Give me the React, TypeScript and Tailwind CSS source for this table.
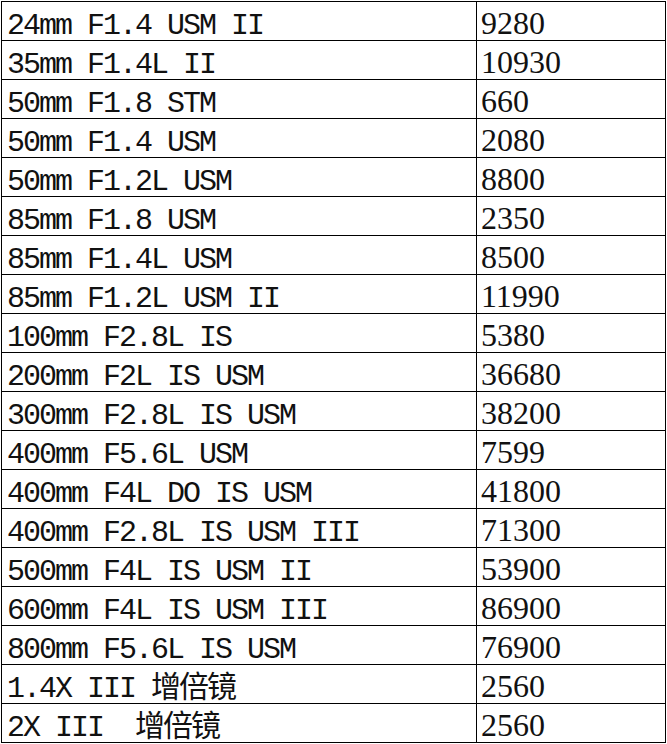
const lenses: [string, string][] = [
  ['24mm F1.4 USM II', '9280'],
  ['35mm F1.4L II', '10930'],
  ['50mm F1.8 STM', '660'],
  ['50mm F1.4 USM', '2080'],
  ['50mm F1.2L USM', '8800'],
  ['85mm F1.8 USM', '2350'],
  ['85mm F1.4L USM', '8500'],
  ['85mm F1.2L USM II', '11990'],
  ['100mm F2.8L IS', '5380'],
  ['200mm F2L IS USM', '36680'],
  ['300mm F2.8L IS USM', '38200'],
  ['400mm F5.6L USM', '7599'],
  ['400mm F4L DO IS USM', '41800'],
  ['400mm F2.8L IS USM III', '71300'],
  ['500mm F4L IS USM II', '53900'],
  ['600mm F4L IS USM III', '86900'],
  ['800mm F5.6L IS USM', '76900'],
  ['1.4X III 增倍镜', '2560'],
  ['2X III  增倍镜', '2560'],
]

export default function App() {
  return (
    <div className="min-h-screen bg-white pl-px pt-px">
      <div className="grid w-[665px] grid-cols-[475px_189px] border-l border-t border-black text-[#111]">
        {lenses.map(([name, price]) => (
          <div key={name} className="contents">
            <div className="flex h-[39px] items-end border-b border-r border-black pl-[5px]">
              <span className="-mb-px whitespace-pre font-['Liberation_Mono','Noto_Sans_CJK_SC',monospace] text-[30px] leading-[30px] tracking-[-2px]">
                {name}
              </span>
            </div>
            <div className="flex h-[39px] items-end border-b border-r border-black pb-px pl-[4px]">
              <span className="font-['Liberation_Serif','Noto_Serif_CJK_SC',serif] text-[32px] leading-[32px]">
                {price}
              </span>
            </div>
          </div>
        ))}
      </div>
    </div>
  )
}
